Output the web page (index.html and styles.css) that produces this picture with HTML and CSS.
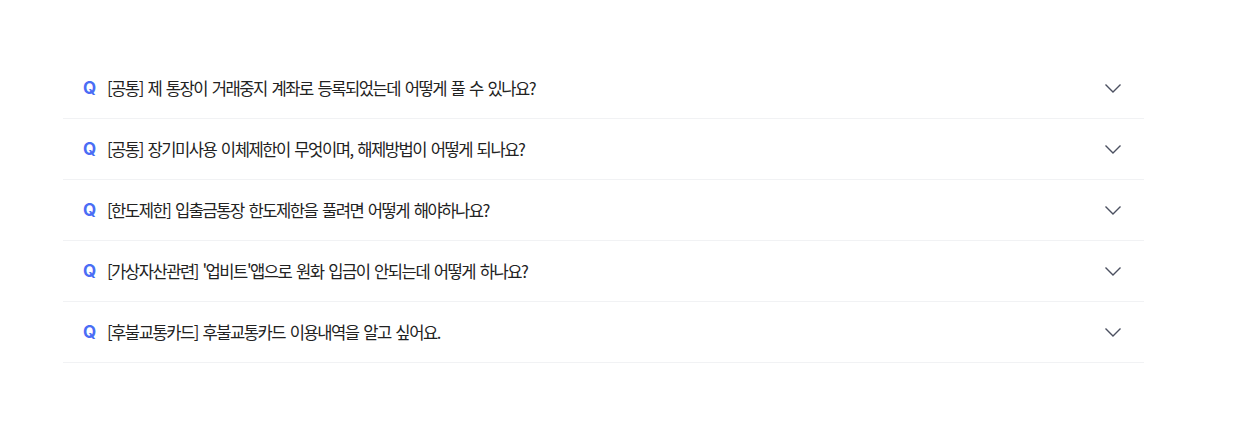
FILE: index.html
```html
<!DOCTYPE html>
<html lang="ko">
<head>
<meta charset="utf-8">
<link rel="stylesheet" href="styles.css">
</head>
<body>
<ul class="faq">
  <li class="faq-item"><span class="q">Q</span><span class="title">[공통] 제 통장이 거래중지 계좌로 등록되었는데 어떻게 풀 수 있나요?</span><svg class="chev" width="18" height="10" viewBox="0 0 18 10"><path d="M1.5 1.5l7.5 7.5 7.5-7.5" fill="none" stroke="#4b5060" stroke-width="1.4"/></svg></li>
  <li class="faq-item"><span class="q">Q</span><span class="title">[공통] 장기미사용 이체제한이 무엇이며, 해제방법이 어떻게 되나요?</span><svg class="chev" width="18" height="10" viewBox="0 0 18 10"><path d="M1.5 1.5l7.5 7.5 7.5-7.5" fill="none" stroke="#4b5060" stroke-width="1.4"/></svg></li>
  <li class="faq-item"><span class="q">Q</span><span class="title">[한도제한] 입출금통장 한도제한을 풀려면 어떻게 해야하나요?</span><svg class="chev" width="18" height="10" viewBox="0 0 18 10"><path d="M1.5 1.5l7.5 7.5 7.5-7.5" fill="none" stroke="#4b5060" stroke-width="1.4"/></svg></li>
  <li class="faq-item"><span class="q">Q</span><span class="title">[가상자산관련] '업비트'앱으로 원화 입금이 안되는데 어떻게 하나요?</span><svg class="chev" width="18" height="10" viewBox="0 0 18 10"><path d="M1.5 1.5l7.5 7.5 7.5-7.5" fill="none" stroke="#4b5060" stroke-width="1.4"/></svg></li>
  <li class="faq-item"><span class="q">Q</span><span class="title">[후불교통카드] 후불교통카드 이용내역을 알고 싶어요.</span><svg class="chev" width="18" height="10" viewBox="0 0 18 10"><path d="M1.5 1.5l7.5 7.5 7.5-7.5" fill="none" stroke="#4b5060" stroke-width="1.4"/></svg></li>
</ul>
</body>
</html>
```
FILE: styles.css
```css
html, body {
  margin: 0;
  padding: 0;
  background: #fff;
}
body {
  font-family: "Noto Sans CJK KR", "Noto Sans", sans-serif;
  padding-top: 58px;
}
.faq {
  list-style: none;
  margin: 0 0 0 63px;
  padding: 0;
  width: 1081px;
}
.faq-item {
  display: flex;
  align-items: center;
  height: 60px;
  border-bottom: 1px solid #f1f2f4;
  padding: 0 22px 0 20px;
}
.q {
  width: 24px;
  color: #4a6df5;
  font-weight: 700;
  font-size: 17px;
  font-family: "Inter", "Noto Sans", sans-serif;
}
.title {
  flex: 1;
  font-size: 16.6px;
  color: #222;
  letter-spacing: -1.5px;
  word-spacing: 1.5px;
}
.chev {
  flex: none;
}
```
